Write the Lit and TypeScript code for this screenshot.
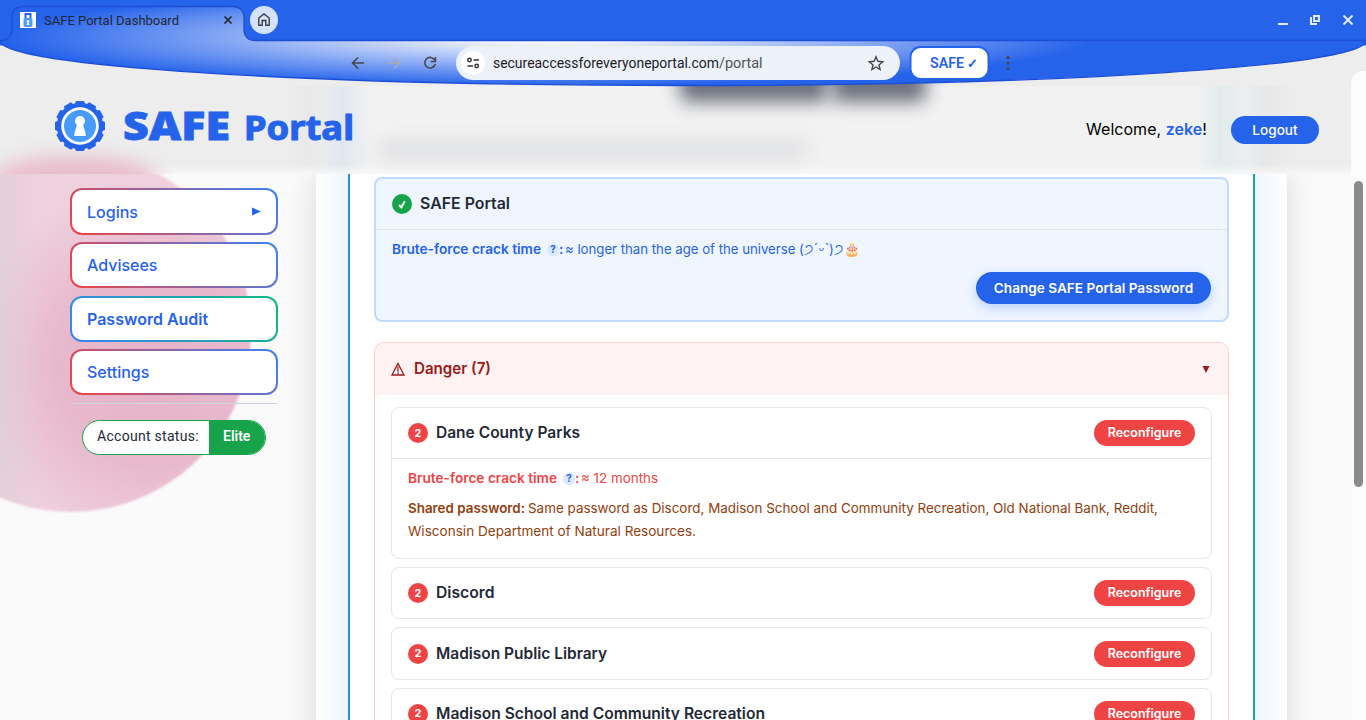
import { LitElement, html, css, svg } from "lit";
import { customElement } from "lit/decorators.js";

const WIDTHS: Record<string, number> = { "Dane County Parks": 144, "Discord": 58.5, "Madison Public Library": 171, "Madison School and Community Recreation": 329 };

@customElement("app-root")
export class AppRoot extends LitElement {
  static styles = css`
    :host { display: block; width: 1366px; height: 720px; overflow: hidden; position: relative; background: #fafafa; font-family: Inter, sans-serif; }
    * { box-sizing: border-box; }
    svg { overflow: visible; flex: none; }
    .orb { position: absolute; left: -110px; top: 151px; width: 361px; height: 361px; border-radius: 50%; filter: blur(1px); background: linear-gradient(90deg, #dccfd6 90px, #dccfd600 150px), radial-gradient(circle at 265px 215px, #e5b3c9 0, #e8b9cd 100px, #efd1de 185px, #efd1de 240px); }
    .layout { display: flex; height: 720px; padding: 174px 79px 0 70px; }
    nav { position: relative; width: 208px; padding-top: 14px; display: flex; flex-direction: column; gap: 7.5px; }
    .item { height: 46px; border: 2px solid transparent; border-radius: 12px; padding: 0 15px; display: flex; align-items: center; justify-content: space-between; font-size: 16px; font-weight: 500; color: #2563eb; background: linear-gradient(#fff, #fff) padding-box, linear-gradient(45deg, #ef4444, #3b82f6) border-box; }
    .item:first-child { height: 47px; margin-bottom: -0.5px; }
    .item.active { font-weight: 600; font-size: 16px; background: linear-gradient(#fff, #fff) padding-box, linear-gradient(45deg, #3b82f6, #10b981) border-box; }
    .line { height: 1px; background: #cbd5e1; }
    .status { display: flex; width: 184px; height: 35px; margin: 8.5px 0 0 12px; border-radius: 18px; border: 1px solid #16a34a; overflow: hidden; font: 400 14px/31px Roboto, sans-serif; letter-spacing: 0.28px; color: #1f2937; background: #fff; }
    .status span { width: 126px; padding-left: 14px; white-space: nowrap; }
    .status b { flex: 1; background: #16a34a; color: #fff; padding-left: 14px; font-weight: 600; letter-spacing: 0; }
    main { position: relative; margin-left: 38px; width: 971px; height: 646px; padding: 0 32px; background: linear-gradient(90deg, #fff, #eff6ff 32px, #eff6ff 939px, #fff); box-shadow: 0 0 28px #00000024; }
    .panel { height: 646px; border: 2px solid transparent; border-width: 0 2px; background: linear-gradient(#fff, #fff) padding-box, linear-gradient(90deg, #2b93cb, #12b18a) border-box; padding: 3px 24px 0; overflow: hidden; }
    .own { height: 145px; border: 2px solid #bfdbfe; border-radius: 8px; background: #eff6ff; display: flex; flex-direction: column; }
    .own .head { height: 51px; padding: 0 16px; border-bottom: 1px solid #e2e4e9; }
    .head { display: flex; align-items: center; gap: 8px; }
    .dot { width: 20px; height: 20px; border-radius: 50%; display: grid; place-items: center; background: #ef4444; color: #fff; font-size: 11px; line-height: 18px; font-weight: 700; padding-bottom: 1px; }
    .dot.ok { background: #16a34a; }
    .change { align-self: flex-end; margin: 3px 16px 0; width: 235px; height: 32px; border-radius: 16px; background: #2563eb; color: #fff; font: 600 13.6px/32px Inter, sans-serif; text-align: center; box-shadow: 0 4px 12px #2563eb40; }
    .danger { margin-top: 20px; border: 1px solid #fecaca; border-radius: 10px; height: 500px; overflow: hidden; }
    .dhead { height: 52px; padding: 0 18px 0 16px; display: flex; align-items: center; background: #fef2f2; }
    .sign { margin-right: 9px; }
    .caret { margin-left: auto; }
    .list { padding: 12px 16px; display: flex; flex-direction: column; gap: 8px; }
    .card { border: 1px solid #e5e7eb; border-radius: 8px; min-height: 52.4px; background: #fff; }
    .card .head { height: 50.4px; padding: 0 16px; }
    .card.open { height: 152px; }
    .card.open .head { height: 51px; border-bottom: 1px solid #e5e7eb; }
    .re { margin-left: auto; width: 101px; height: 26px; border-radius: 14px; background: #ef4444; color: #fff; text-align: center; font: 600 12.5px/26px Inter, sans-serif; }
    header { position: absolute; left: 0; top: 44px; width: 1366px; height: 130px; background: #ededee; overflow: hidden; }
    .tint { position: absolute; inset: 42px 0 0 0; background: linear-gradient(#0000 79px, #fafafacc 88px), linear-gradient(90deg, #0000 285px, #e9e9ea 305px, #e9ebed 325px, #e0e8ef 342px, #f2f2f3 372px, #f2f2f3 1195px, #e2ebeb 1220px, #ebeef2 1243px, #e7e7e8 1265px, #ededee 1295px); }
    .ghost { position: absolute; background: #6b6f7b; border-radius: 8px; filter: blur(9px); }
    .g1 { left: 680px; top: 24px; width: 148px; height: 34px; }
    .g4 { left: 832px; top: 24px; width: 94px; height: 34px; }
    .g2 { left: 378px; top: 97px; width: 430px; height: 17px; background: #dedfe1; }
    .g3 { left: -10px; top: 112px; width: 170px; height: 50px; border-radius: 50%; background: #e8bccb; }
    .brand { position: absolute; left: 54px; top: 55px; }
    .user { position: absolute; right: 47px; top: 72px; display: flex; align-items: center; gap: 24px; font-size: 16px; color: #000; height: 28px; }
    .hello { margin-top: -2px; letter-spacing: 0.04px; }
    .user b { color: #2563eb; font-weight: 600; }
    .logout { width: 88px; height: 28px; border-radius: 14px; background: #2563eb; color: #fff; text-align: center; font: 500 13.6px/28px Inter, sans-serif; }
    .chrome { position: absolute; left: 0; top: 0; }
    .track { position: absolute; left: 1351px; top: 71px; width: 15px; height: 649px; border-radius: 12px 0 0 0; background: #fcfcfc; }
    .thumb { position: absolute; left: 3px; top: 110px; width: 9px; height: 306px; border-radius: 5px; background: #8b8b8b; }
  `;

  private crack(color: string) {
    return svg`<text x="16" y="24" font-weight="600" fill=${color} textLength="149" lengthAdjust="spacingAndGlyphs">Brute-force crack time</text>
      <circle cx="177" cy="20" r="6.3" fill="#dbeafe"/><text x="177" y="23" font-size="10" font-weight="700" fill="#2563eb" text-anchor="middle">?</text>
      <text x="183" y="24" font-weight="600" fill=${color}>:</text>`;
  }

  private card(name: string, open = false) {
    return html`<section class="card ${open ? "open" : ""}">
      <div class="head"><span class="dot">2</span><svg width="380" height="24"><text x="0" y="17" fill="#1f2937" font-size="15.5" font-weight="600" textLength=${WIDTHS[name]} lengthAdjust="spacingAndGlyphs">${name}</text></svg><span class="re">Reconfigure</span></div>
      ${open ? html`<svg width="819" height="95"><g font-size="13.6" fill="#92400e">
        ${this.crack("#ef4444")}
        <text x="189" y="24" fill="#ef4444" textLength="77" lengthAdjust="spacingAndGlyphs">≈ 12 months</text>
        <text x="16" y="54" font-weight="600" textLength="117" lengthAdjust="spacingAndGlyphs">Shared password:</text>
        <text x="136" y="54" textLength="630" lengthAdjust="spacingAndGlyphs">Same password as Discord, Madison School and Community Recreation, Old National Bank, Reddit,</text>
        <text x="16" y="77" textLength="288" lengthAdjust="spacingAndGlyphs">Wisconsin Department of Natural Resources.</text></g></svg>` : ""}
    </section>`;
  }

  render() {
    return html`
      <div class="orb"></div>
      <div class="layout">
        <nav>
          <div class="item">Logins<svg width="9" height="9"><path d="M0 0.500L9 4.500L0 8.500Z" fill="#2563eb"/></svg></div>
          <div class="item">Advisees</div>
          <div class="item active">Password Audit</div>
          <div class="item">Settings</div>
          <div class="line"></div>
          <div class="status"><span>Account status:</span><b>Elite</b></div>
        </nav>
        <main><div class="panel">
          <section class="own">
            <div class="head"><span class="dot ok"><svg width="10" height="10" viewBox="0 0 10 10"><path d="M2 6L4.300 8.300L7.800 2.300" stroke="#fff" stroke-width="2" fill="none"/></svg></span>
              <svg width="100" height="24"><text x="0" y="17" fill="#1f2937" font-size="15.500" font-weight="600" textLength="90" lengthAdjust="spacingAndGlyphs">SAFE Portal</text></svg></div>
            <svg width="500" height="39"><g font-size="13.600" fill="#2563eb">
              ${this.crack("#2563eb")}
              <text x="189" y="24" textLength="295" lengthAdjust="spacingAndGlyphs">≈ longer than the age of the universe (<tspan font-size="14.500">੭ˊᵕˋ</tspan>)<tspan font-size="14.500">੭</tspan><tspan font-size="13.300">🎂</tspan></text></g></svg>
            <div class="change">Change SAFE Portal Password</div>
          </section>
          <section class="danger">
            <div class="dhead"><svg class="sign" width="14" height="14" viewBox="0 0 14 14"><path d="M7 1.500L13 13H1Z" fill="none" stroke="#991b1b" stroke-width="1.300"/><path d="M7 4.500V9.700M7 10.500V12" stroke="#991b1b" stroke-width="1.300"/></svg><svg width="90" height="24"><text x="0" y="17" fill="#991b1b" font-size="15.500" font-weight="600" textLength="77" lengthAdjust="spacingAndGlyphs">Danger (7)</text></svg>
              <svg class="caret" width="8" height="8"><path d="M0.500 1H7.500L4 8Z" fill="#991b1b"/></svg></div>
            <div class="list">${this.card("Dane County Parks", true)}${this.card("Discord")}${this.card("Madison Public Library")}${this.card("Madison School and Community Recreation")}</div>
          </section>
        </div></main>
      </div>
      <header>
        <div class="tint"></div><div class="ghost g3"></div><div class="ghost g1"></div><div class="ghost g4"></div><div class="ghost g2"></div>
        <svg class="brand" width="310" height="56">
          ${Array.from({ length: 12 }, (_, i) => svg`<path d="M20.500 6L22 2H30L31.500 6Z" fill="#2563eb" transform="rotate(${i * 30} 26 27)"/>`)}
          <circle cx="26" cy="27" r="23.200" fill="#2563eb"/><circle cx="26" cy="27" r="18.800" fill="#fff"/><circle cx="26" cy="27" r="16" fill="#4a9bff"/>
          <circle cx="26" cy="22" r="5" fill="#fff"/><path d="M23.500 24H28.500L32 36Q32 37 31 37H21Q20 37 20 36Z" fill="#fff"/>
          <g fill="#2563eb" stroke="#2563eb" font-family="Noto Sans, Open Sans, sans-serif">
            <text x="69" y="41" font-size="38.500" font-weight="900" stroke-width=".8" textLength="107" lengthAdjust="spacingAndGlyphs">SAFE</text>
            <text x="190" y="41" font-size="34.500" font-weight="700" stroke-width="1.100" textLength="110" lengthAdjust="spacingAndGlyphs">Portal</text></g>
        </svg>
        <div class="user"><span class="hello">Welcome, <b>zeke</b>!</span><span class="logout">Logout</span></div>
      </header>
      <svg class="chrome" width="1366" height="90" font-family="Roboto, sans-serif">
        <defs><radialGradient id="glow" gradientUnits="userSpaceOnUse" cx="0" cy="0" r="1" gradientTransform="translate(552 37) scale(545 49)"><stop offset="0" stop-color="#fff"/><stop offset=".15" stop-color="#f0f3fe"/><stop offset="1" stop-color="#2563eb"/></radialGradient></defs>
        <rect width="1366" height="46" fill="#2563eb"/>
        <path d="M0 45.500H1366V60H0Z" fill="#ededee"/>
        <path d="M0 40.500Q12 40 12 29V18Q12 6.500 24 6.500H232Q244 6.500 244 18V29Q244 40.500 256 40.500H1366C1366 66 1060 85.500 683 85.500S0 66 0 40.500Z" fill="url(#glow)" stroke="#1d4ed8" stroke-width="1.300"/>
        <rect x="20" y="12" width="16" height="16" fill="#fff"/><path d="M25.500 18V14H30.500V18" fill="none" stroke="#2563eb" stroke-width="2"/><rect x="23.500" y="18" width="9" height="9" rx="2" fill="#4a9bff"/><circle cx="28" cy="21.300" r="1.400" fill="#fff"/><path d="M28 21L29.500 25H26.500Z" fill="#fff"/>
        <text x="44" y="25" font-size="13" fill="#1f2733" textLength="135" lengthAdjust="spacingAndGlyphs">SAFE Portal Dashboard</text>
        <path d="M224.500 16.500L231.500 23.500M231.500 16.500L224.500 23.500" stroke="#222" stroke-width="1.600"/>
        <circle cx="264" cy="20" r="14" fill="#d5e2fc"/><path d="M258.800 18L264 14L269.200 18V25.200H265.800V20.500H262.200V25.200H258.800Z" fill="none" stroke="#3b3f45" stroke-width="1.400"/>
        <g fill="none" stroke-width="1.600" stroke="#474747"><path d="M364 63H353M358 57.500L352.500 63L358 68.500"/><path d="M388 63H399M394 57.500L399.500 63L394 68.500" stroke="#a7aaaf"/><path d="M434.700 60A5.300 5.300 0 1 0 435.300 64M435.400 57V61.500H430.800"/></g>
        <rect x="456" y="46" width="444" height="34" rx="17" fill="#edf1fa"/><circle cx="473" cy="63" r="12" fill="#fff"/>
        <g fill="none" stroke="#333" stroke-width="1.500"><circle cx="469.500" cy="60" r="1.700"/><path d="M473.500 60H479M467.500 66H473"/><circle cx="476.700" cy="66" r="1.700"/></g>
        <text x="493" y="68" font-size="14" fill="#202124" textLength="226" lengthAdjust="spacingAndGlyphs">secureaccessforeveryoneportal.com</text><text x="719" y="68" font-size="14" fill="#50545a" textLength="43.500" lengthAdjust="spacingAndGlyphs">/portal</text>
        <path d="M876 56.800L877.900 61.300L882.700 61.700L879 64.900L880.100 69.500L876 67L871.900 69.500L873 64.900L869.300 61.700L874.100 61.300Z" fill="none" stroke="#474747" stroke-width="1.400"/>
        <rect x="910.500" y="47" width="78" height="32" rx="10" fill="#fff" stroke="#2563eb" stroke-width="2"/>
        <text x="930" y="68" font-size="14" font-weight="600" fill="#2563eb" textLength="34" lengthAdjust="spacingAndGlyphs">SAFE</text><text x="967" y="68" font-size="13" font-weight="700" fill="#2563eb">✓</text>
        <g fill="#474747"><circle cx="1008" cy="57.500" r="1.500"/><circle cx="1008" cy="63" r="1.500"/><circle cx="1008" cy="68.500" r="1.500"/></g>
        <path d="M1278 24H1288M1343.500 15.500L1352.500 24.500M1352.500 15.500L1343.500 24.500" stroke="#e3eafd" stroke-width="2"/><path d="M1311 17V24H1317M1314 16H1319V21H1314Z" fill="none" stroke="#e3eafd" stroke-width="2"/>
      </svg>
      <div class="track"><div class="thumb"></div></div>`;
  }
}
